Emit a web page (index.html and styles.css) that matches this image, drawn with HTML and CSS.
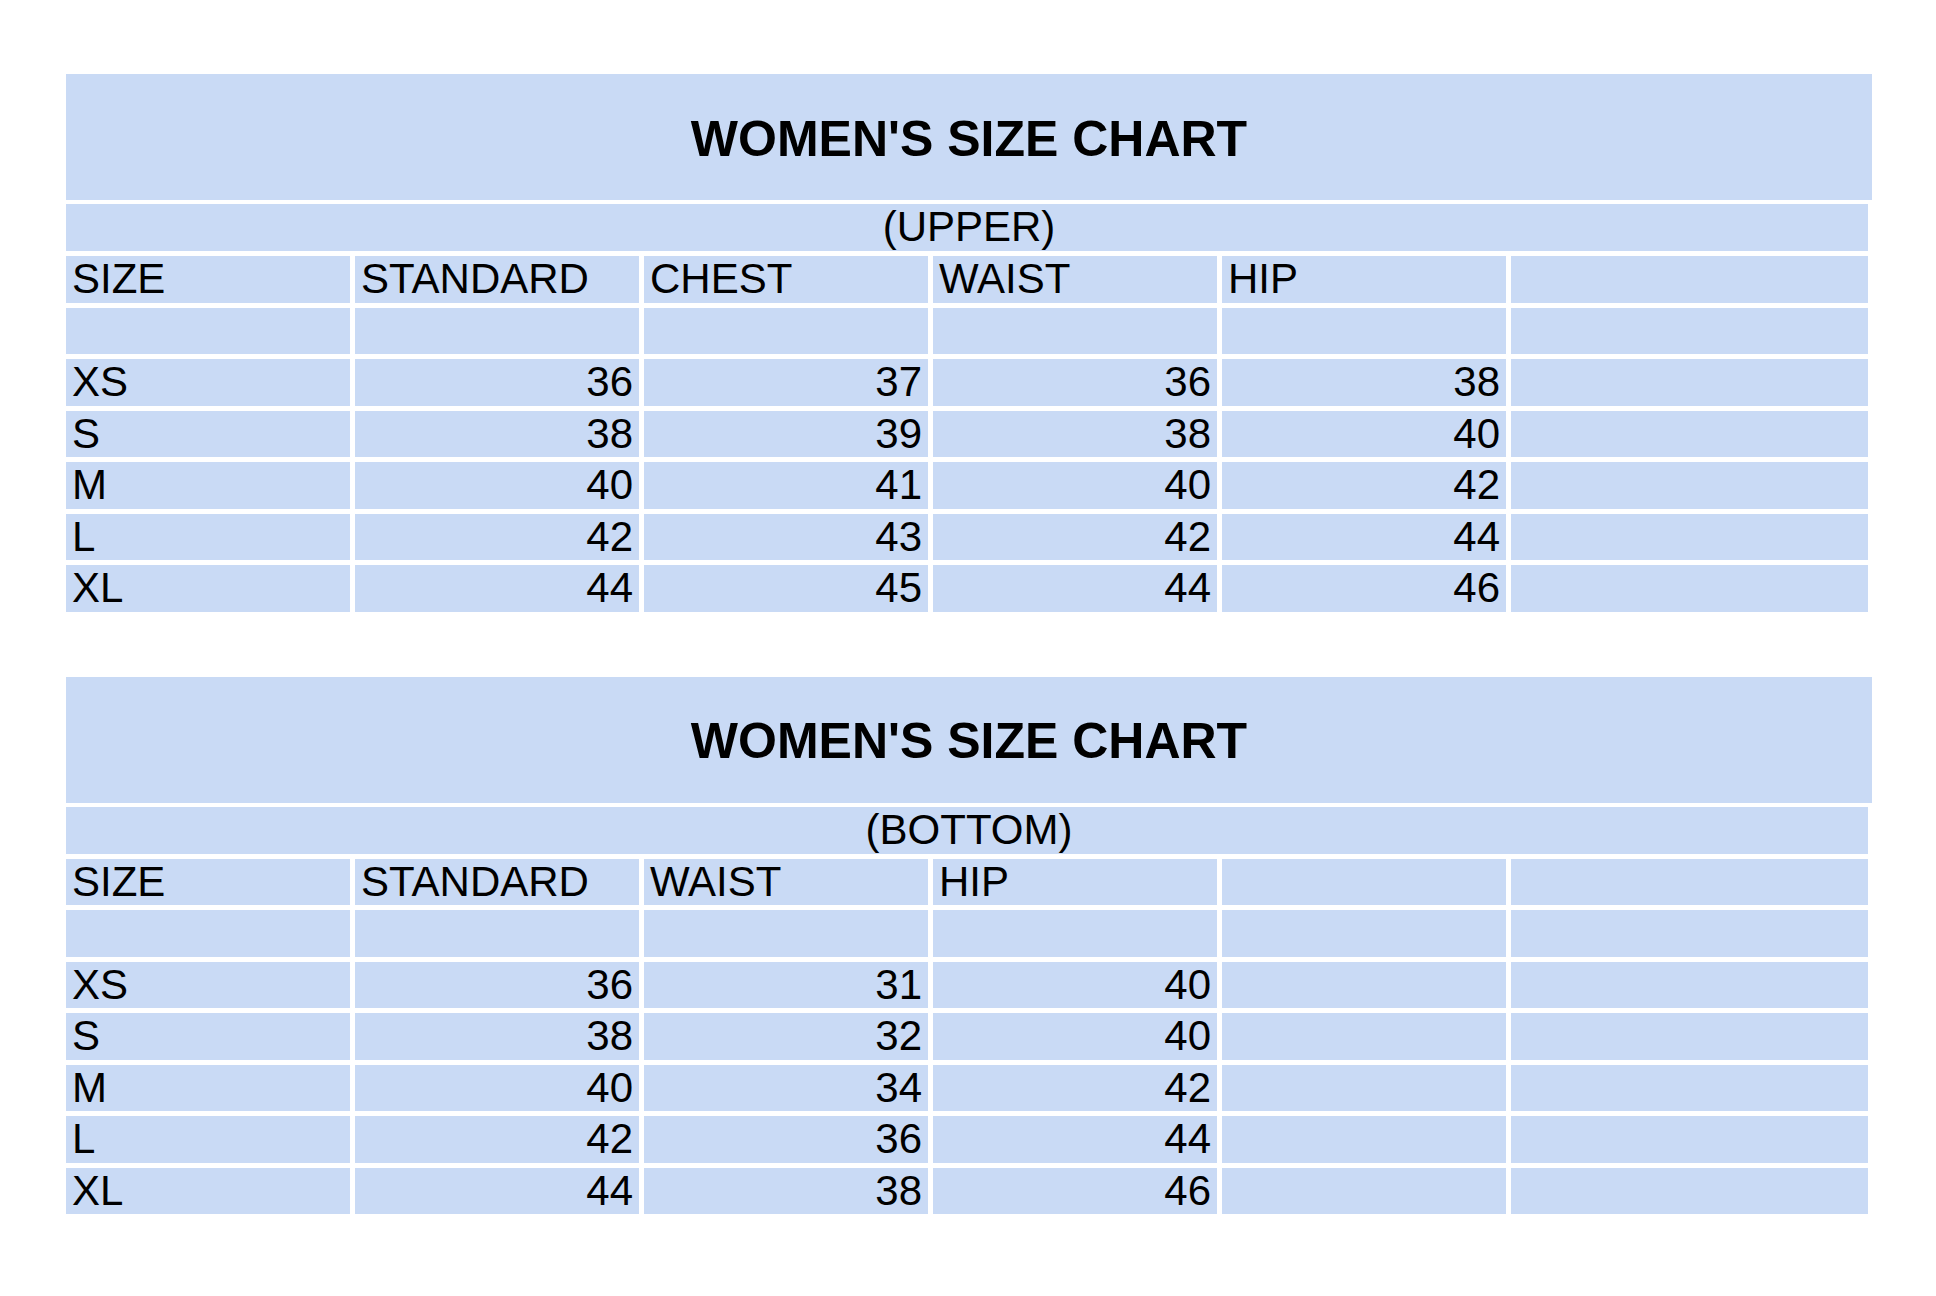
FILE: index.html
```html
<!DOCTYPE html>
<html lang="en">
<head>
<meta charset="utf-8">
<title>Women's Size Chart</title>
<link rel="stylesheet" href="styles.css">
</head>
<body>
<main class="page">
  <section class="chart">
    <h1 class="chart-title">WOMEN'S SIZE CHART</h1>
    <div class="grid">
      <div class="cell sub">(UPPER)</div>

      <div class="cell">SIZE</div>
      <div class="cell">STANDARD</div>
      <div class="cell">CHEST</div>
      <div class="cell">WAIST</div>
      <div class="cell">HIP</div>
      <div class="cell"></div>

      <div class="cell"></div><div class="cell"></div><div class="cell"></div><div class="cell"></div><div class="cell"></div><div class="cell"></div>

      <div class="cell">XS</div><div class="cell num">36</div><div class="cell num">37</div><div class="cell num">36</div><div class="cell num">38</div><div class="cell"></div>
      <div class="cell">S</div><div class="cell num">38</div><div class="cell num">39</div><div class="cell num">38</div><div class="cell num">40</div><div class="cell"></div>
      <div class="cell">M</div><div class="cell num">40</div><div class="cell num">41</div><div class="cell num">40</div><div class="cell num">42</div><div class="cell"></div>
      <div class="cell">L</div><div class="cell num">42</div><div class="cell num">43</div><div class="cell num">42</div><div class="cell num">44</div><div class="cell"></div>
      <div class="cell">XL</div><div class="cell num">44</div><div class="cell num">45</div><div class="cell num">44</div><div class="cell num">46</div><div class="cell"></div>
    </div>
  </section>

  <section class="chart">
    <h1 class="chart-title">WOMEN'S SIZE CHART</h1>
    <div class="grid">
      <div class="cell sub">(BOTTOM)</div>

      <div class="cell">SIZE</div>
      <div class="cell">STANDARD</div>
      <div class="cell">WAIST</div>
      <div class="cell">HIP</div>
      <div class="cell"></div>
      <div class="cell"></div>

      <div class="cell"></div><div class="cell"></div><div class="cell"></div><div class="cell"></div><div class="cell"></div><div class="cell"></div>

      <div class="cell">XS</div><div class="cell num">36</div><div class="cell num">31</div><div class="cell num">40</div><div class="cell"></div><div class="cell"></div>
      <div class="cell">S</div><div class="cell num">38</div><div class="cell num">32</div><div class="cell num">40</div><div class="cell"></div><div class="cell"></div>
      <div class="cell">M</div><div class="cell num">40</div><div class="cell num">34</div><div class="cell num">42</div><div class="cell"></div><div class="cell"></div>
      <div class="cell">L</div><div class="cell num">42</div><div class="cell num">36</div><div class="cell num">44</div><div class="cell"></div><div class="cell"></div>
      <div class="cell">XL</div><div class="cell num">44</div><div class="cell num">38</div><div class="cell num">46</div><div class="cell"></div><div class="cell"></div>
    </div>
  </section>
</main>
</body>
</html>
```

FILE: styles.css
```css
html, body {
  margin: 0;
  padding: 0;
  background: #ffffff;
}

body {
  font-family: "Liberation Sans", Arial, "Helvetica Neue", sans-serif;
  color: #000000;
}

.page {
  padding: 74px 0 0 66px;
  display: flex;
  flex-direction: column;
  gap: 65px;
}

.chart {
  display: flex;
  flex-direction: column;
  gap: 4px;
}

.chart-title {
  margin: 0;
  width: 1806px;
  height: 126px;
  box-sizing: border-box;
  padding-top: 3px;
  background: #c9daf5;
  display: flex;
  align-items: center;
  justify-content: center;
  font-size: 50px;
  font-weight: bold;
  line-height: 1;
}

.grid {
  display: grid;
  grid-template-columns: repeat(5, 284px) 357px;
  grid-template-rows: 47px repeat(7, 46.5px);
  column-gap: 5px;
  row-gap: 5px;
  width: 1802px;
}

.cell {
  background: #c9daf5;
  font-size: 42px;
  line-height: 45px;
  padding: 0 6px;
  white-space: nowrap;
  overflow: hidden;
}

.sub {
  grid-column: 1 / -1;
  text-align: center;
  line-height: 46px;
  padding-left: 10px;
}

.num {
  text-align: right;
}
```
